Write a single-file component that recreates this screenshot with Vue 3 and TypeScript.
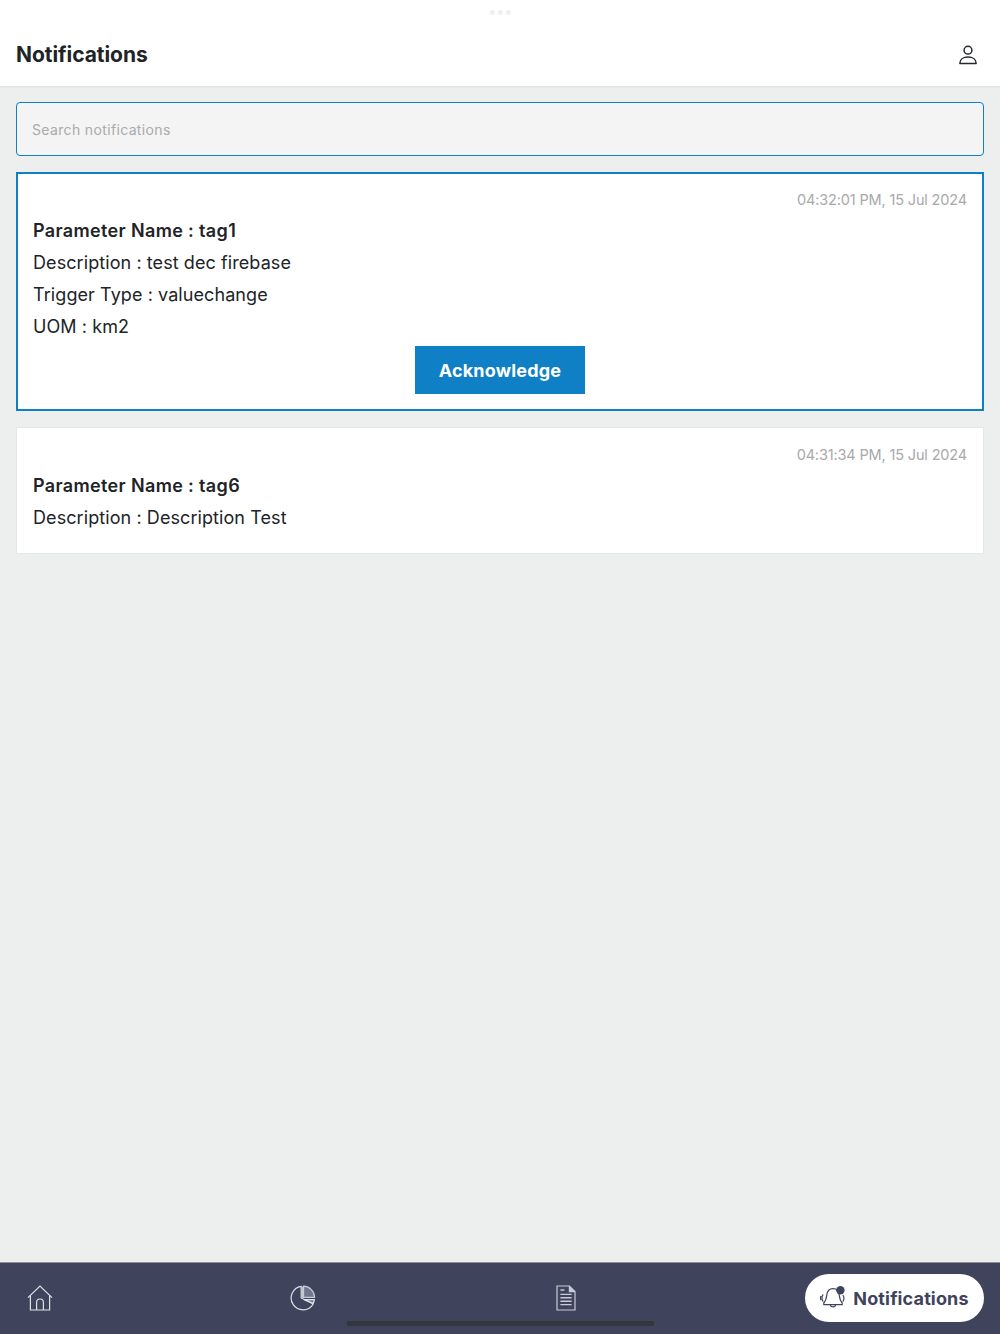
<template>
  <div class="page">
    <header class="top-bar">
      <div class="dots"><span></span><span></span><span></span></div>
      <h1>Notifications</h1>
      <button class="icon-btn" aria-label="Profile">
        <svg width="20" height="20" viewBox="0 0 20 20" fill="none" stroke="#26282c" stroke-width="1.5">
          <circle cx="10" cy="5.2" r="3.9" />
          <path d="M1.9 18.6v-.6c0-3.4 3.2-5.9 8.1-5.9s8.1 2.5 8.1 5.9v.6z" stroke-linejoin="round" />
        </svg>
      </button>
    </header>

    <main class="content">
      <input class="search" type="text" placeholder="Search notifications" />

      <article
        v-for="item in notifications"
        :key="item.time"
        class="card"
        :class="{ active: item.active }"
      >
        <div class="time">{{ item.time }}</div>
        <div class="row title">Parameter Name : {{ item.name }}</div>
        <div v-for="line in item.lines" :key="line" class="row">{{ line }}</div>
        <button v-if="item.active" class="ack-btn">Acknowledge</button>
      </article>
    </main>

    <footer class="tab-bar">
      <button class="tab" aria-label="Home">
        <svg width="26" height="26" viewBox="0 0 26 26" fill="none" stroke="#dfe1e8" stroke-width="1.2">
          <path d="M1 12.6 13 1l12 11.6" />
          <path d="M3.4 10.6V25h19.2V10.6" />
          <path d="M9.6 25v-7.6a3.4 3.4 0 0 1 6.8 0V25" />
        </svg>
      </button>
      <button class="tab" aria-label="Reports">
        <svg width="26" height="26" viewBox="0 0 26 26" fill="none" stroke="#dfe1e8" stroke-width="1.2">
          <path d="M11.2 1.4A11.8 11.8 0 1 0 23.2 19L11.2 13z" />
          <path d="M13.6 1.200v11.200h11A11.4 11.4 0 0 0 13.600 1.200z" fill="#72768f" stroke="#c9cbd6" />
          <path d="m14 14.600 10.400 0a11 11 0 0 1-1.200 3.600z" fill="#72768f" />
          <path d="M11.400 1.600h2.200v11.200h-2.200z" fill="#c5c7d3" stroke="none" />
        </svg>
      </button>
      <button class="tab" aria-label="Documents">
        <svg width="20" height="26" viewBox="0 0 20 26" fill="none" stroke="#c9cbd6" stroke-width="1.2">
          <path d="M1 1h12.4L19 6.6V25H1z" />
          <path d="M13.4 1v5.6H19" fill="#c9cbd6" />
          <path d="M4.4 5h4M4.4 9.4h11.2M4.4 12.8h11.2M4.4 16.2h11.2M4.4 19.6h11.2" stroke-width="1.4" />
        </svg>
      </button>
      <button class="pill">
        <svg width="26" height="24" viewBox="0 0 26 24" fill="none" stroke="#3f435c" stroke-width="1.2">
          <path d="M13 2.600c-3.800 0-5.800 2.800-6.200 6.400-.4 3.200-1 5.800-3 8v1.600h18.400V17c-2-2.200-2.600-4.800-3-8-.4-3.600-2.400-6.400-6.200-6.400z" />
          <path d="M10.400 18.800c.3 2.800 4.900 2.800 5.200 0" />
          <path d="M3.200 8.400c-1.500 2.100-1.500 5 0 7.200M1 10c-.7 1.300-.7 2.900 0 4.200M22.800 9c1.400 2 1.400 4.600 0 6.600" />
          <circle cx="20.400" cy="4.200" r="4.200" fill="#3f435c" stroke="none" />
        </svg>
        <span>Notifications</span>
      </button>
      <div class="home-indicator"></div>
    </footer>
  </div>
</template>

<script setup lang="ts">
interface NotificationItem {
  time: string
  name: string
  lines: string[]
  active: boolean
}

const notifications: NotificationItem[] = [
  {
    time: '04:32:01 PM, 15 Jul 2024',
    name: 'tag1',
    lines: ['Description : test dec firebase', 'Trigger Type : valuechange', 'UOM : km2'],
    active: true
  },
  {
    time: '04:31:34 PM, 15 Jul 2024',
    name: 'tag6',
    lines: ['Description : Description Test'],
    active: false
  }
]
</script>

<style>
body {
  background: #edefee;
}
</style>

<style scoped>
.page {
  height: 1334px;
  display: flex;
  flex-direction: column;
  background: #edefee;
  font-family: "Inter", "Noto Sans", sans-serif;
  color: #212327;
  overflow: hidden;
}

.top-bar {
  position: relative;
  height: 86px;
  flex-shrink: 0;
  box-sizing: border-box;
  padding: 24px 16px 0;
  display: flex;
  align-items: center;
  justify-content: space-between;
  background: #fff;
  box-shadow: 0 1px 2px rgba(0, 0, 0, 0.08);
}

.top-bar h1 {
  margin: 0 0 2px;
  font-size: 21px;
  font-weight: 700;
  letter-spacing: -0.05px;
}

.dots {
  position: absolute;
  top: 10px;
  left: 490px;
  display: flex;
  gap: 3px;
}

.dots span {
  width: 5px;
  height: 5px;
  border-radius: 50%;
  background: #eef0f0;
}

.icon-btn,
.tab {
  padding: 0;
  border: none;
  background: none;
  display: flex;
  align-items: center;
  justify-content: center;
}

.icon-btn {
  width: 32px;
  height: 32px;
}

.content {
  flex: 1;
  padding: 16px;
  display: flex;
  flex-direction: column;
  gap: 16px;
}

.search {
  height: 54px;
  box-sizing: border-box;
  padding: 0 15px;
  border: 1px solid #0f80c6;
  border-radius: 4px;
  background: #f4f4f4;
  font-family: inherit;
  font-size: 14px;
  letter-spacing: 0.35px;
  outline: none;
}

.search::placeholder {
  color: #a9abac;
  opacity: 1;
}

.card {
  box-sizing: border-box;
  height: 127px;
  padding: 16px;
  display: flex;
  flex-direction: column;
  background: #fff;
  border: 1px solid #e6e8e8;
}

.card.active {
  height: 239px;
  padding: 15px;
  border: 2px solid #0f80c6;
}

.time {
  height: 26px;
  line-height: 22px;
  text-align: right;
  font-size: 14.5px;
  letter-spacing: -0.15px;
  color: #a7a9ab;
}

.row {
  height: 32px;
  line-height: 32px;
  font-size: 18px;
  letter-spacing: 0.08px;
}

.title {
  font-weight: 600;
  letter-spacing: 0.35px;
}

.ack-btn {
  align-self: center;
  width: 170px;
  height: 48px;
  margin-top: 3px;
  border: none;
  background: #0f80c6;
  color: #fff;
  font-family: inherit;
  font-size: 18px;
  font-weight: 700;
  letter-spacing: 0.2px;
}

.tab-bar {
  position: relative;
  height: 72px;
  flex-shrink: 0;
  box-sizing: border-box;
  padding: 0 16px 1px;
  display: flex;
  align-items: center;
  justify-content: space-between;
  background: #3f435c;
  border-top: 1px solid #8d8f96;
}

.tab {
  width: 48px;
  height: 48px;
}

.pill {
  width: 179px;
  height: 48px;
  padding: 0;
  border: none;
  border-radius: 24px;
  background: #fff;
  display: flex;
  align-items: center;
  justify-content: center;
  gap: 7px;
  color: #3f435c;
  font-family: inherit;
  font-size: 18px;
  font-weight: 700;
  letter-spacing: 0.15px;
}

.home-indicator {
  position: absolute;
  left: 347px;
  bottom: 8px;
  width: 307px;
  height: 5px;
  background: #33353f;
}
</style>
